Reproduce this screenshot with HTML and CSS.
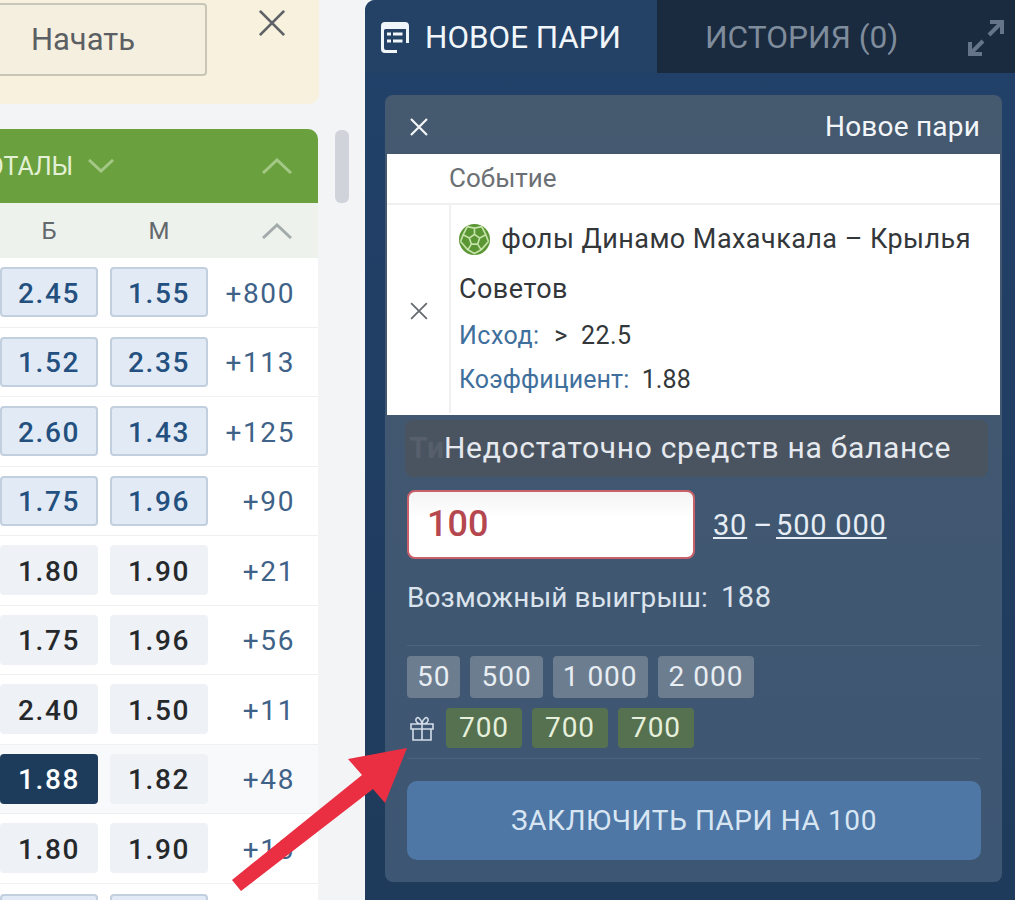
FILE: index.html
```html
<!DOCTYPE html>
<html lang="en">

<head>
    <meta charset="UTF-8">
    <meta name="viewport" content="width=device-width, initial-scale=1.0">
    <title>Новое пари</title>
    <link rel="stylesheet" href="styles.css">
</head>

<body>
    <div class="page">
        <div class="left">
            <div class="promo">
                <button class="start-btn">Начать</button>
                <svg class="promo-close" viewBox="0 0 30 30"><path d="M2 2 L28 28 M28 2 L2 28" /></svg>
            </div>

            <div class="market">
                <div class="market-head">
                    <span class="market-title">ТОТАЛЫ</span>
                    <svg class="chev-down" viewBox="0 0 26 14"><path d="M1 1 L13 12 L25 1" /></svg>
                    <svg class="chev-up" viewBox="0 0 30 16"><path d="M1 15 L15 2 L29 15" /></svg>
                </div>
                <div class="market-cols">
                    <span class="col">Б</span>
                    <span class="col">М</span>
                    <svg class="chev-up grey" viewBox="0 0 30 16"><path d="M1 15 L15 2 L29 15" /></svg>
                </div>
                <div class="row"><span class="odd up">2.45</span><span class="odd up">1.55</span><span class="more">+800</span></div>
                <div class="row"><span class="odd up">1.52</span><span class="odd up">2.35</span><span class="more">+113</span></div>
                <div class="row"><span class="odd up">2.60</span><span class="odd up">1.43</span><span class="more">+125</span></div>
                <div class="row"><span class="odd up">1.75</span><span class="odd up">1.96</span><span class="more">+90</span></div>
                <div class="row"><span class="odd">1.80</span><span class="odd">1.90</span><span class="more">+21</span></div>
                <div class="row"><span class="odd">1.75</span><span class="odd">1.96</span><span class="more">+56</span></div>
                <div class="row"><span class="odd">2.40</span><span class="odd">1.50</span><span class="more">+11</span></div>
                <div class="row picked"><span class="odd active">1.88</span><span class="odd">1.82</span><span class="more">+48</span></div>
                <div class="row"><span class="odd">1.80</span><span class="odd">1.90</span><span class="more">+10</span></div>
                <div class="row last"><span class="odd up"></span><span class="odd up"></span></div>
            </div>
            <div class="scrollbar"></div>
        </div>

        <div class="panel">
            <div class="tabs">
                <div class="tab active">
                    <svg class="tab-icon" viewBox="0 0 30 32">
                        <path class="sheet" d="M5 1 H25 Q29 1 29 5 V22 H26 V8 H5.5 Q4 8 4 9.5 V27 Q4 29 6 29 H17 V32 H5 Q1 32 1 28 V5 Q1 1 5 1 Z" />
                        <path class="lines" d="M7 13 H11 M13 13 H22.5 M7 20 H11 M13 20 H22.5" />
                    </svg>
                    <span>НОВОЕ ПАРИ</span>
                </div>
                <div class="tab">
                    <span>ИСТОРИЯ (0)</span>
                    <svg class="expand" viewBox="0 0 36 36">
                        <path d="M22 2 H34 V14 M33 3 L21 15 M14 34 H2 V22 M3 33 L15 21" />
                    </svg>
                </div>
            </div>

            <div class="card">
                <div class="card-head">
                    <svg class="card-close" viewBox="0 0 18 18"><path d="M1 1 L17 17 M17 1 L1 17" /></svg>
                    <span>Новое пари</span>
                </div>

                <div class="slip">
                    <div class="slip-head">Событие</div>
                    <div class="slip-row">
                        <div class="slip-x">
                            <svg viewBox="0 0 16 16"><path d="M1 1 L15 15 M15 1 L1 15" /></svg>
                        </div>
                        <div class="slip-body">
                            <div class="slip-title">
                                <svg class="ball" viewBox="0 0 30 30">
                                    <circle cx="15" cy="15" r="15" fill="#5b9635" />
                                    <path d="M15 10 L20 13.5 L18 19.5 H12 L10 13.5 Z M15 10 V4 M20 13.5 L26 10.5 M18 19.5 L21.5 25 M12 19.5 L8.5 25 M10 13.5 L4 10.5 M8 2.5 L15 4 L22 2.5 M22 2.5 L26 10.5 L28.5 17 M8 2.5 L4 10.5 L1.5 17 M8.5 25 L15 28.5 L21.5 25 M21.5 25 L28.5 17 M8.5 25 L1.5 17" />
                                </svg>
                                фолы Динамо Махачкала – Крылья Советов
                            </div>
                            <div class="slip-line"><span class="slip-label">Исход:</span> <span class="slip-sign">&gt;</span><span class="slip-value">22.5</span></div>
                            <div class="slip-line tight"><span class="slip-label">Коэффициент:</span> 1.88</div>
                        </div>
                    </div>
                </div>

                <div class="toast-wrap">
                    <div class="toast"><span class="toast-under">Ти</span>Недостаточно средств на балансе</div>
                </div>

                <div class="stake">
                    <div class="stake-input">100</div>
                    <div class="limits"><u>30</u><span class="dash">–</span><u>500 000</u></div>
                </div>
                <div class="win">Возможный выигрыш:<span class="win-value">188</span></div>

                <div class="chips-box">
                    <div class="chips">
                        <span class="chip">50</span>
                        <span class="chip wide">500</span>
                        <span class="chip">1 000</span>
                        <span class="chip wide">2 000</span>
                    </div>
                    <div class="chips">
                        <svg class="gift" viewBox="0 0 26 26">
                            <path d="M2 9 H24 V14 H2 Z M4 14 V25 H22 V14 M13 9 V25 M13 9 C9 9 6 7 7 4 C8 1 12 3 13 9 C14 3 18 1 19 4 C20 7 17 9 13 9 Z" />
                        </svg>
                        <span class="chip bonus">700</span>
                        <span class="chip bonus">700</span>
                        <span class="chip bonus">700</span>
                    </div>
                </div>

                <button class="submit">ЗАКЛЮЧИТЬ ПАРИ НА 100</button>
            </div>
        </div>

        <svg class="arrow" viewBox="0 0 1015 900">
            <path d="M407 748 L348 759 L362 775 L232 880 L241 891 L373 789 L385 803 Z" />
        </svg>
    </div>
</body>

</html>
```

FILE: styles.css
```css
* {
    box-sizing: border-box;
}

html,
body {
    margin: 0;
    height: 900px;
    overflow: hidden;
}

body {
    font-family: Roboto, "Liberation Sans", sans-serif;
    background-color: #f2f4f6;
}

.page {
    position: relative;
    display: flex;
    height: 900px;
}

/* left column */
.left {
    position: relative;
    width: 365px;
    flex: none;
    overflow: hidden;
}

.promo {
    display: flex;
    align-items: flex-start;
    width: 319px;
    height: 104px;
    padding: 3px 0 0 0;
    background-color: #f7f1de;
    border-bottom-right-radius: 10px;
}

.start-btn {
    flex: none;
    width: 248px;
    height: 73px;
    margin-left: -41px;
    padding: 0;
    font-family: inherit;
    font-size: 31px;
    color: #5b5f63;
    background-color: #f5efdf;
    border: 2px solid #c8c6b8;
    border-radius: 4px;
}

.promo-close {
    width: 28px;
    height: 28px;
    margin: 6px 0 0 51px;
}

.promo-close path {
    fill: none;
    stroke: #5f6367;
    stroke-width: 3;
}

.market {
    width: 318px;
    margin-top: 25px;
}

.market-head {
    display: flex;
    align-items: center;
    height: 74px;
    background-color: #6aa03e;
    border-top-right-radius: 10px;
}

.market-title {
    margin-left: -28px;
    font-size: 25px;
    color: #e4f0d6;
}

.chev-down {
    width: 26px;
    height: 14px;
    margin-left: 15px;
}

.chev-down path,
.chev-up path {
    fill: none;
    stroke: #a4c885;
    stroke-width: 3;
}

.chev-up {
    width: 30px;
    height: 16px;
    margin-left: auto;
    margin-right: 26px;
}

.chev-up.grey path {
    stroke: #a3abab;
}

.market-cols {
    display: flex;
    align-items: center;
    height: 55px;
    background-color: #eef2ec;
    font-size: 24px;
    color: #62686c;
}

.col {
    width: 98px;
    text-align: center;
}

.col + .col {
    margin-left: 12px;
}

.row {
    display: flex;
    align-items: center;
    height: 69.5px;
    background-color: #fff;
    border-bottom: 1px solid #eef0f2;
}

.row.picked {
    background-color: #f8f9fa;
}

.row.last {
    align-items: flex-start;
    padding-top: 10px;
}

.odd {
    display: flex;
    align-items: center;
    justify-content: center;
    width: 98px;
    height: 50px;
    margin-right: 12px;
    padding-top: 2px;
    font-size: 28px;
    font-weight: 500;
    letter-spacing: 1.6px;
    color: #26292c;
    background-color: #eef1f5;
    border-radius: 4px;
}

.odd.up {
    color: #24507f;
    background-color: #e2ebf5;
    border: 2px solid #c2cfde;
}

.odd.active {
    color: #fff;
    background-color: #1d3c5c;
}

.more {
    width: 75px;
    padding-top: 2px;
    text-align: right;
    font-size: 28px;
    letter-spacing: 1.6px;
    color: #3f6288;
}

.scrollbar {
    position: absolute;
    left: 335px;
    top: 130px;
    width: 14px;
    height: 73px;
    background-color: #d0d4da;
    border-radius: 6px;
}

/* right panel */
.panel {
    flex: 1;
    padding-bottom: 19px;
    background: linear-gradient(#22416a, #1f3b5b);
    border-top-left-radius: 10px;
    overflow: hidden;
}

.tabs {
    display: flex;
    height: 73px;
}

.tab {
    display: flex;
    align-items: center;
    flex: 1;
    padding: 2px 0 0 48px;
    font-size: 31.7px;
    color: #7f8c9b;
    background-color: #1a2a3f;
}

.tab.active {
    flex: none;
    width: 292px;
    gap: 15px;
    padding: 2px 0 0 15px;
    font-size: 31.4px;
    color: #f1f6fb;
    background-color: #234265;
}

.tab-icon {
    width: 30px;
    height: 32px;
    margin-top: -1px;
}

.sheet {
    fill: #f1f6fb;
}

.lines {
    fill: none;
    stroke: #f1f6fb;
    stroke-width: 3;
}

.expand {
    width: 36px;
    height: 36px;
    margin-left: auto;
    margin-right: 11px;
}

.expand path {
    fill: none;
    stroke: #66748a;
    stroke-width: 4;
}

.card {
    width: 617px;
    height: 787px;
    margin: 22px 0 0 20px;
    padding: 0 2px;
    background: linear-gradient(#45596f, #3d5673);
    border-radius: 8px;
}

.card-head {
    display: flex;
    align-items: center;
    justify-content: space-between;
    height: 59px;
    padding: 4px 20px 0 23px;
    font-size: 28px;
    letter-spacing: 0.2px;
    color: #f3f6f9;
}

.card-close {
    width: 18px;
    height: 18px;
}

.card-close path {
    fill: none;
    stroke: #f3f6f9;
    stroke-width: 2.2;
}

.slip {
    height: 261px;
    background-color: #fff;
}

.slip-head {
    height: 51px;
    padding: 9px 0 0 62px;
    font-size: 26px;
    color: #6b7074;
    border-bottom: 2px solid #eef0f2;
}

.slip-row {
    display: flex;
    height: 208px;
}

.slip-x {
    display: flex;
    align-items: center;
    justify-content: center;
    width: 64px;
    padding: 4px 0 0 2px;
    border-right: 2px solid #eef0f2;
}

.slip-x svg {
    width: 18px;
    height: 18px;
}

.slip-x path {
    fill: none;
    stroke: #666b70;
    stroke-width: 1.6;
}

.slip-body {
    flex: 1;
    padding: 9px 20px 0 8px;
    font-size: 27px;
    letter-spacing: 0.45px;
    color: #33373a;
}

.slip-title {
    line-height: 50px;
}

.ball {
    width: 31px;
    height: 31px;
    margin-right: 4px;
    vertical-align: -7px;
}

.ball path {
    fill: none;
    stroke: #c5e2a8;
    stroke-width: 1.6;
}

.slip-line {
    height: 44px;
    line-height: 44px;
    font-size: 25px;
    letter-spacing: 0.5px;
}

.slip-line.tight {
    letter-spacing: 0.1px;
}

.slip-label {
    margin-right: 6px;
    color: #3f6f9c;
}

.slip-sign {
    margin-left: 2px;
}

.slip-value {
    margin-left: 13px;
}

.toast-wrap {
    height: 62px;
    padding: 5px 12px 0 18px;
}

.toast {
    position: relative;
    height: 57px;
    padding-left: 39px;
    font-size: 30px;
    line-height: 56px;
    letter-spacing: 0.7px;
    color: #e6eaef;
    background-color: #4a5461;
    border-radius: 8px;
}

.toast-under {
    position: absolute;
    left: 4px;
    top: 0;
    font-weight: 700;
    color: #565f6b;
}

.stake {
    display: flex;
    align-items: center;
    margin: 13px 0 0 20px;
}

.stake-input {
    width: 288px;
    height: 69px;
    padding-left: 18px;
    font-size: 36px;
    font-weight: 500;
    line-height: 65px;
    color: #b5474f;
    background: linear-gradient(#f4f4f4, #fff 40%);
    border: 2px solid #c9606a;
    border-radius: 8px;
}

.limits {
    margin-left: 18px;
    font-size: 29px;
    letter-spacing: 0.8px;
    color: #e6edf5;
}

.dash {
    margin: 0 3px 0 6px;
}

.win {
    margin: 21px 0 0 20px;
    font-size: 28px;
    letter-spacing: 0.1px;
    color: #dbe3ec;
}

.win-value {
    margin-left: 13px;
    font-size: 29px;
    letter-spacing: 0.6px;
}

.chips-box {
    height: 114px;
    margin: 31px 20px 0;
    padding-top: 10px;
    border-top: 1px solid #4e637c;
    border-bottom: 1px solid #4e637c;
}

.chips {
    display: flex;
    align-items: center;
    gap: 10px;
    margin-bottom: 10px;
}

.chip {
    height: 42px;
    padding: 0 10px;
    font-size: 28px;
    line-height: 41px;
    letter-spacing: 1px;
    color: #e8edf2;
    background-color: #6c7d90;
    border-radius: 4px;
}

.chip.wide {
    padding: 0 11px;
}

.chip.bonus {
    height: 40px;
    width: 76px;
    line-height: 39px;
    padding: 0;
    text-align: center;
    color: #e6f0dc;
    background-color: #56714f;
}

.gift {
    width: 26px;
    height: 26px;
    margin: 0 1px 0 2px;
}

.gift path {
    fill: none;
    stroke: #d3dde8;
    stroke-width: 1.6;
}

.submit {
    display: block;
    width: 574px;
    height: 79px;
    margin: 22px 0 0 20px;
    font-family: inherit;
    font-size: 28px;
    letter-spacing: 0.6px;
    color: #d8e6f4;
    background-color: #4e77a5;
    border: 0;
    border-radius: 10px;
}

/* red pointer laid over everything */
.arrow {
    position: absolute;
    left: 0;
    top: 0;
    width: 1015px;
    height: 900px;
    pointer-events: none;
}

.arrow path {
    fill: #ea2f43;
}
```
